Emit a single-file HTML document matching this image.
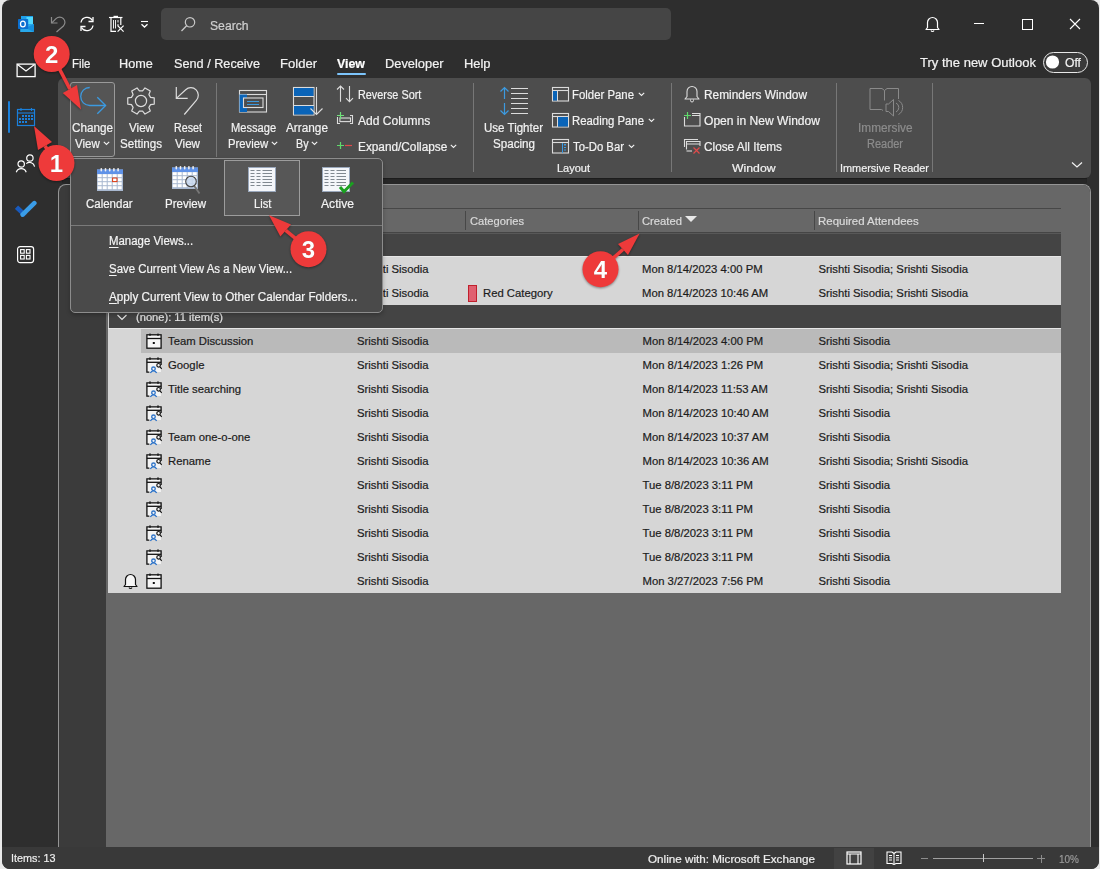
<!DOCTYPE html>
<html><head><meta charset="utf-8"><style>
html,body{margin:0;padding:0;}
body{width:1100px;height:869px;position:relative;overflow:hidden;background:#e9e9e9;font-family:"Liberation Sans", sans-serif;}
div{-webkit-text-stroke:0.2px currentColor;}
u{text-decoration:underline;text-underline-offset:1.5px;}
</style></head><body>
<div style="position:absolute;left:2px;top:0px;width:1097px;height:869px;background:#2e2e2e;border-radius:8px;"></div><svg style="position:absolute;left:17px;top:15px;" width="19" height="19" viewBox="0 0 19 19" fill="none">
<rect x="4" y="1" width="12" height="9" fill="#1fa0ea"/>
<rect x="9.5" y="2" width="6.5" height="7" fill="#50d9ff"/>
<path d="M3.2 9 L16.8 9 L16.8 17 L3.2 17 Z" fill="#28a8ea"/>
<path d="M9 13 L16.8 9 L16.8 17 Z" fill="#1490df"/>
<rect x="1" y="4" width="10.2" height="10" rx="0.8" fill="#0a6fd0"/>
<ellipse cx="5.9" cy="8.9" rx="2.4" ry="2.9" stroke="#fff" stroke-width="1.25"/>
</svg><svg style="position:absolute;left:49px;top:15px;" width="18" height="18" viewBox="0 0 18 18" fill="none">
<path d="M2.5 2 V8 H8.5" stroke="#8c8c8c" stroke-width="1.2"/>
<path d="M2.8 7.8 L7 3.6 A5.2 5.2 0 0 1 14.4 11 L7.5 17" stroke="#8c8c8c" stroke-width="1.2"/>
</svg><svg style="position:absolute;left:78px;top:15px;" width="18" height="18" viewBox="0 0 18 18" fill="none">
<path d="M3 7.5 A6.2 6.2 0 0 1 14.5 5.5" stroke="#fff" stroke-width="1.3"/>
<path d="M15 2 V6.5 H10.5" stroke="#fff" stroke-width="1.3"/>
<path d="M15 10.5 A6.2 6.2 0 0 1 3.5 12.5" stroke="#fff" stroke-width="1.3"/>
<path d="M3 16 V11.5 H7.5" stroke="#fff" stroke-width="1.3"/>
</svg><svg style="position:absolute;left:108px;top:15px;" width="18" height="18" viewBox="0 0 18 18" fill="none">
<path d="M1 2.5 H14.5" stroke="#fff" stroke-width="1.2"/>
<path d="M5.5 1.5 H10" stroke="#fff" stroke-width="1.4"/>
<path d="M3 2.5 V16.3 H8" stroke="#fff" stroke-width="1.2"/>
<path d="M12.8 2.5 V10" stroke="#fff" stroke-width="1.2"/>
<path d="M5.5 5 V13.5 M7.5 5 V13.5 M10 5 V7.5 M10 9 V11" stroke="#fff" stroke-width="0.9"/>
<path d="M9.6 10.6 L15.6 16.6 M15.6 10.6 L9.6 16.6" stroke="#fff" stroke-width="1.2"/>
</svg><svg style="position:absolute;left:140px;top:19px;" width="10" height="10" viewBox="0 0 10 10" fill="none">
<path d="M1 2.5 H8" stroke="#fff" stroke-width="1.1"/>
<path d="M1.5 5.2 L4.5 8 L7.5 5.2" stroke="#fff" stroke-width="1.3"/>
</svg><div style="position:absolute;left:161px;top:8px;width:510px;height:32px;background:#454545;border-radius:5px;"></div><svg style="position:absolute;left:180px;top:16px;" width="17" height="17" viewBox="0 0 17 17" fill="none">
<circle cx="10" cy="6.3" r="4.7" stroke="#c8c8c8" stroke-width="1.2"/>
<path d="M6.6 9.8 L1.5 15" stroke="#c8c8c8" stroke-width="1.3"/>
</svg><div style="position:absolute;left:210px;top:20.00px;font-size:12px;line-height:12px;color:#cfcfcf;font-weight:normal;white-space:nowrap;transform:scaleX(1.0150);transform-origin:0 0;">Search</div><svg style="position:absolute;left:924px;top:15px;" width="18" height="18" viewBox="0 0 18 18" fill="none">
<path d="M3.5 12.5 V7.5 A5 5 0 0 1 13.5 7.5 V12.5 L15 14.5 H2 L3.5 12.5 Z" stroke="#fff" stroke-width="1.2" stroke-linejoin="round"/>
<path d="M7 15.5 A1.6 1.6 0 0 0 10 15.5" stroke="#fff" stroke-width="1.1"/>
</svg><div style="position:absolute;left:974px;top:23px;width:10px;height:1px;background:#fff;"></div><div style="position:absolute;left:1022px;top:19px;width:9px;height:9px;border:1px solid #fff;"></div><svg style="position:absolute;left:1069px;top:18px;" width="12" height="12" viewBox="0 0 12 12" fill="none"><path d="M1 1 L11 11 M11 1 L1 11" stroke="#fff" stroke-width="1.1"/></svg><div style="position:absolute;left:72px;top:58.00px;font-size:12px;line-height:12px;color:#f2f2f2;font-weight:normal;white-space:nowrap;transform:scaleX(0.9564);transform-origin:0 0;">File</div><div style="position:absolute;left:118.8px;top:58.00px;font-size:12px;line-height:12px;color:#f2f2f2;font-weight:normal;white-space:nowrap;transform:scaleX(1.0557);transform-origin:0 0;">Home</div><div style="position:absolute;left:174px;top:58.00px;font-size:12px;line-height:12px;color:#f2f2f2;font-weight:normal;white-space:nowrap;transform:scaleX(1.0566);transform-origin:0 0;">Send / Receive</div><div style="position:absolute;left:280px;top:58.00px;font-size:12px;line-height:12px;color:#f2f2f2;font-weight:normal;white-space:nowrap;transform:scaleX(1.0877);transform-origin:0 0;">Folder</div><div style="position:absolute;left:385px;top:58.00px;font-size:12px;line-height:12px;color:#f2f2f2;font-weight:normal;white-space:nowrap;transform:scaleX(1.0712);transform-origin:0 0;">Developer</div><div style="position:absolute;left:464px;top:58.00px;font-size:12px;line-height:12px;color:#f2f2f2;font-weight:normal;white-space:nowrap;transform:scaleX(1.0734);transform-origin:0 0;">Help</div><div style="position:absolute;left:337px;top:58.00px;font-size:12px;line-height:12px;color:#ffffff;font-weight:bold;white-space:nowrap;transform:scaleX(1.0317);transform-origin:0 0;">View</div><div style="position:absolute;left:337px;top:73px;width:29px;height:2px;background:#7cc4fb;border-radius:1px;"></div><div style="position:absolute;left:920px;top:57.00px;font-size:12px;line-height:12px;color:#f2f2f2;font-weight:normal;white-space:nowrap;transform:scaleX(1.0847);transform-origin:0 0;">Try the new Outlook</div><div style="position:absolute;left:1043px;top:52px;width:43px;height:19px;border:1px solid #e8e8e8;border-radius:11px;background:#3a3a3a;"></div><svg style="position:absolute;left:1045px;top:55px;" width="16" height="16" viewBox="0 0 16 16" fill="none"><circle cx="7.5" cy="7" r="6.6" fill="#ffffff"/></svg><div style="position:absolute;left:1065px;top:57.00px;font-size:12px;line-height:12px;color:#f2f2f2;font-weight:normal;white-space:nowrap;transform:scaleX(1.0129);transform-origin:0 0;">Off</div><svg style="position:absolute;left:16px;top:63px;" width="21" height="16" viewBox="0 0 21 16" fill="none">
<rect x="1.1" y="1.1" width="18" height="12.5" stroke="#fff" stroke-width="1.3"/>
<path d="M1.5 1.5 L10 8 L18.5 1.5" stroke="#fff" stroke-width="1.2"/>
</svg><div style="position:absolute;left:8px;top:101px;width:2px;height:32px;background:#1a80dc;border-radius:1px;"></div><svg style="position:absolute;left:16px;top:106px;" width="21" height="22" viewBox="0 0 21 22" fill="none">
<rect x="1.5" y="3.5" width="17" height="16" stroke="#1a80dc" stroke-width="1.2"/>
<path d="M1.5 7 H18.5" stroke="#1a80dc" stroke-width="1.1"/>
<path d="M5 2 V5 M15.5 2 V5" stroke="#1a80dc" stroke-width="1.1"/>
<g fill="#1a80dc">
<rect x="6" y="9" width="2" height="2"/><rect x="9" y="9" width="2" height="2"/><rect x="12" y="9" width="2" height="2"/><rect x="15" y="9" width="2" height="2"/>
<rect x="3" y="12" width="2" height="2"/><rect x="6" y="12" width="2" height="2"/><rect x="9" y="12" width="2" height="2"/><rect x="12" y="12" width="2" height="2"/><rect x="15" y="12" width="2" height="2"/>
<rect x="3" y="15" width="2" height="2"/><rect x="6" y="15" width="2" height="2"/><rect x="9" y="15" width="2" height="2"/>
</g>
</svg><svg style="position:absolute;left:15px;top:152px;" width="22" height="22" viewBox="0 0 22 22" fill="none">
<circle cx="6.2" cy="12" r="3.2" stroke="#fff" stroke-width="1.2"/>
<path d="M1.3 20.3 A5.2 5.2 0 0 1 11.2 20.3" stroke="#fff" stroke-width="1.2"/>
<circle cx="14.9" cy="6" r="3.2" stroke="#fff" stroke-width="1.2"/>
<path d="M11.3 11.6 A5.2 5.2 0 0 1 19.6 14.6" stroke="#fff" stroke-width="1.2"/>
</svg><svg style="position:absolute;left:15px;top:199px;" width="22" height="20" viewBox="0 0 22 20" fill="none">
<path d="M3.2 9.8 L8.6 14.8" stroke="#185abd" stroke-width="4.6" stroke-linecap="square"/>
<path d="M7.6 15.6 L19.3 4.2" stroke="#3a9de8" stroke-width="4.6" stroke-linecap="round"/>
</svg><svg style="position:absolute;left:16px;top:245px;" width="19" height="19" viewBox="0 0 19 19" fill="none">
<rect x="1.6" y="1.6" width="16" height="16" rx="2.5" stroke="#fff" stroke-width="1.2"/>
<rect x="4.6" y="4.6" width="3.6" height="3.6" stroke="#fff" stroke-width="1.1"/>
<rect x="10.4" y="4.6" width="3.6" height="3.6" stroke="#fff" stroke-width="1.1"/>
<rect x="4.6" y="10.4" width="3.6" height="3.6" stroke="#fff" stroke-width="1.1"/>
<rect x="10.4" y="10.4" width="3.6" height="3.6" stroke="#fff" stroke-width="1.1"/>
</svg><div style="position:absolute;left:62px;top:178px;width:1025px;height:6px;background:#272727;box-shadow:inset 0 1px 1px #1c1c1c;border-radius:0 0 3px 3px;"></div><div style="position:absolute;left:58px;top:78px;width:1033px;height:100px;background:#4d4d4d;border-radius:6px;"></div><div style="position:absolute;left:70px;top:82px;width:45px;height:75px;background:#555555;border:1px solid #9a9a9a;border-radius:3px;box-sizing:border-box;"></div><svg style="position:absolute;left:78px;top:85px;" width="30" height="31" viewBox="0 0 30 31" fill="none">
<path d="M11.7 2.5 A9 9 0 0 0 11.7 20.5 H27.5" stroke="#3c9ae0" stroke-width="1.3"/>
<path d="M19.3 12.2 L27.6 20.5 L19.3 28.7" stroke="#3c9ae0" stroke-width="1.3"/>
</svg><div style="position:absolute;left:72px;top:122.00px;font-size:12px;line-height:12px;color:#f2f2f2;font-weight:normal;white-space:nowrap;transform:scaleX(0.9751);transform-origin:0 0;">Change</div><div style="position:absolute;left:75px;top:138.00px;font-size:12px;line-height:12px;color:#f2f2f2;font-weight:normal;white-space:nowrap;transform:scaleX(0.9614);transform-origin:0 0;">View</div><svg style="position:absolute;left:103px;top:141px;" width="7" height="5" viewBox="0 0 7 5" fill="none"><path d="M0.8 0.8 L3.5 3.5 L6.2 0.8" stroke="#f2f2f2" stroke-width="1.1"/></svg><svg style="position:absolute;left:125px;top:85px;" width="32" height="32" viewBox="0 0 32 32" fill="none">
<path d="M25.52 12.34 L29.25 12.94 L29.25 19.06 L25.52 19.66 L23.93 22.42 L25.28 25.95 L19.98 29.01 L17.60 26.07 L14.40 26.07 L12.02 29.01 L6.72 25.95 L8.07 22.42 L6.48 19.66 L2.75 19.06 L2.75 12.94 L6.48 12.34 L8.07 9.58 L6.72 6.05 L12.02 2.99 L14.40 5.93 L17.60 5.93 L19.98 2.99 L25.28 6.05 L23.93 9.58 Z" stroke="#dcdcdc" stroke-width="1.2" stroke-linejoin="round"/>
<circle cx="16" cy="16" r="5.6" stroke="#dcdcdc" stroke-width="1.2"/>
</svg><div style="position:absolute;left:129px;top:122.00px;font-size:12px;line-height:12px;color:#f2f2f2;font-weight:normal;white-space:nowrap;transform:scaleX(0.9691);transform-origin:0 0;">View</div><div style="position:absolute;left:120px;top:138.00px;font-size:12px;line-height:12px;color:#f2f2f2;font-weight:normal;white-space:nowrap;transform:scaleX(0.9686);transform-origin:0 0;">Settings</div><svg style="position:absolute;left:173px;top:85px;" width="30" height="32" viewBox="0 0 30 32" fill="none">
<path d="M3.3 2 V13.4 H14.7" stroke="#dcdcdc" stroke-width="1.2"/>
<path d="M3.3 13.4 L12.7 4.7 A7.5 7.5 0 0 1 23.3 15.3 L11.3 29.5" stroke="#dcdcdc" stroke-width="1.2"/>
</svg><div style="position:absolute;left:174px;top:122.00px;font-size:12px;line-height:12px;color:#f2f2f2;font-weight:normal;white-space:nowrap;transform:scaleX(0.8929);transform-origin:0 0;">Reset</div><div style="position:absolute;left:175px;top:138.00px;font-size:12px;line-height:12px;color:#f2f2f2;font-weight:normal;white-space:nowrap;transform:scaleX(0.9691);transform-origin:0 0;">View</div><div style="position:absolute;left:216px;top:83px;width:1px;height:74px;background:#777777;"></div><svg style="position:absolute;left:238px;top:89px;" width="31" height="25" viewBox="0 0 31 25" fill="none">
<rect x="1.5" y="1.5" width="27" height="21.5" stroke="#dcdcdc" stroke-width="1.1"/>
<path d="M1.5 5.5 H28.5" stroke="#dcdcdc" stroke-width="1.1"/>
<rect x="1.5" y="5.5" width="7.5" height="17.5" fill="#0a64b8"/>
<rect x="5.5" y="9" width="19.5" height="9.5" fill="#4d4d4d" stroke="#dcdcdc" stroke-width="1.1"/>
<path d="M9 12.5 H21 M9 15.5 H21" stroke="#3c9ae0" stroke-width="1"/>
</svg><div style="position:absolute;left:230.8px;top:122.00px;font-size:12px;line-height:12px;color:#f2f2f2;font-weight:normal;white-space:nowrap;transform:scaleX(0.9281);transform-origin:0 0;">Message</div><div style="position:absolute;left:227.8px;top:138.00px;font-size:12px;line-height:12px;color:#f2f2f2;font-weight:normal;white-space:nowrap;transform:scaleX(0.9417);transform-origin:0 0;">Preview</div><svg style="position:absolute;left:271px;top:141px;" width="7" height="5" viewBox="0 0 7 5" fill="none"><path d="M0.8 0.8 L3.5 3.5 L6.2 0.8" stroke="#f2f2f2" stroke-width="1.1"/></svg><svg style="position:absolute;left:292px;top:86px;" width="32" height="31" viewBox="0 0 32 31" fill="none">
<rect x="1.5" y="1.5" width="20.5" height="27.5" stroke="#dcdcdc" stroke-width="1.1"/>
<rect x="2" y="2" width="19.5" height="8.5" fill="#0a64b8"/>
<rect x="2" y="19.5" width="19.5" height="9" fill="#0a64b8"/>
<path d="M1.5 10.5 H22 M1.5 19.5 H22" stroke="#dcdcdc" stroke-width="1.1"/>
<path d="M24.5 1 V28.5 M18.5 22.5 L24.5 28.5 L30.5 22.5" stroke="#dcdcdc" stroke-width="1.1"/>
</svg><div style="position:absolute;left:286px;top:122.00px;font-size:12px;line-height:12px;color:#f2f2f2;font-weight:normal;white-space:nowrap;transform:scaleX(0.9835);transform-origin:0 0;">Arrange</div><div style="position:absolute;left:295.5px;top:138.00px;font-size:12px;line-height:12px;color:#f2f2f2;font-weight:normal;white-space:nowrap;transform:scaleX(0.8919);transform-origin:0 0;">By</div><svg style="position:absolute;left:311px;top:141px;" width="7" height="5" viewBox="0 0 7 5" fill="none"><path d="M0.8 0.8 L3.5 3.5 L6.2 0.8" stroke="#f2f2f2" stroke-width="1.1"/></svg><svg style="position:absolute;left:335px;top:84px;" width="20" height="20" viewBox="0 0 20 20" fill="none">
<path d="M5.5 2 V17.7 M2 5.5 L5.5 2 L9 5.5" stroke="#dcdcdc" stroke-width="1.1"/>
<path d="M14.5 2 V17.7 M11 14.2 L14.5 17.7 L18 14.2" stroke="#dcdcdc" stroke-width="1.1"/>
</svg><div style="position:absolute;left:357.7px;top:89.00px;font-size:12px;line-height:12px;color:#f2f2f2;font-weight:normal;white-space:nowrap;transform:scaleX(0.9039);transform-origin:0 0;">Reverse Sort</div><svg style="position:absolute;left:335px;top:110px;" width="20" height="17" viewBox="0 0 20 17" fill="none">
<path d="M2.5 7 V13.5 H5" stroke="#dcdcdc" stroke-width="1.1"/>
<path d="M15 5.5 H17.5 V13.5 H15" stroke="#dcdcdc" stroke-width="1.1"/>
<rect x="4.9" y="8" width="10.6" height="3.6" fill="#555" stroke="#dcdcdc" stroke-width="1.1"/>
<path d="M5.5 2 V9 M2 5.5 H9" stroke="#6fe07a" stroke-width="1.2"/>
</svg><div style="position:absolute;left:357.7px;top:115.00px;font-size:12px;line-height:12px;color:#f2f2f2;font-weight:normal;white-space:nowrap;transform:scaleX(1.0035);transform-origin:0 0;">Add Columns</div><svg style="position:absolute;left:335px;top:140px;" width="20" height="12" viewBox="0 0 20 12" fill="none"><path d="M5.5 2 V9 M2 5.5 H9" stroke="#5fd96b" stroke-width="1.2"/><path d="M10 5.5 H17" stroke="#e04a4a" stroke-width="1.2"/></svg><div style="position:absolute;left:357.7px;top:141.00px;font-size:12px;line-height:12px;color:#f2f2f2;font-weight:normal;white-space:nowrap;transform:scaleX(0.9842);transform-origin:0 0;">Expand/Collapse</div><svg style="position:absolute;left:450px;top:144px;" width="7" height="5" viewBox="0 0 7 5" fill="none"><path d="M0.8 0.8 L3.5 3.5 L6.2 0.8" stroke="#f2f2f2" stroke-width="1.1"/></svg><div style="position:absolute;left:473px;top:83px;width:1px;height:89px;background:#777777;"></div><svg style="position:absolute;left:498px;top:85px;" width="32" height="32" viewBox="0 0 32 32" fill="none">
<path d="M6.5 2.5 V14 M2.5 6.5 L6.5 2.5 L10.5 6.5" stroke="#3c9ae0" stroke-width="1.2"/>
<path d="M6.5 18 V29.5 M2.5 25.5 L6.5 29.5 L10.5 25.5" stroke="#3c9ae0" stroke-width="1.2"/>
<path d="M13 3.5 H30 M13 8.5 H30 M13 13.5 H30 M13 18.5 H30 M13 23.5 H30 M13 28.5 H30" stroke="#dcdcdc" stroke-width="1.1"/>
</svg><div style="position:absolute;left:484px;top:122.00px;font-size:12px;line-height:12px;color:#f2f2f2;font-weight:normal;white-space:nowrap;transform:scaleX(0.9615);transform-origin:0 0;">Use Tighter</div><div style="position:absolute;left:493px;top:138.00px;font-size:12px;line-height:12px;color:#f2f2f2;font-weight:normal;white-space:nowrap;transform:scaleX(0.9683);transform-origin:0 0;">Spacing</div><svg style="position:absolute;left:551px;top:86px;" width="19" height="17" viewBox="0 0 19 17" fill="none">
<rect x="1.5" y="1.5" width="16" height="13.5" stroke="#dcdcdc" stroke-width="1.1"/>
<path d="M1.5 4.5 H17.5" stroke="#dcdcdc" stroke-width="1.1"/>
<rect x="2" y="5" width="4" height="9.5" fill="#0a64b8"/>
<path d="M6.5 5 V15" stroke="#dcdcdc" stroke-width="1"/>
</svg><div style="position:absolute;left:572px;top:89.00px;font-size:12px;line-height:12px;color:#f2f2f2;font-weight:normal;white-space:nowrap;transform:scaleX(0.9484);transform-origin:0 0;">Folder Pane</div><svg style="position:absolute;left:637.5px;top:92px;" width="7" height="5" viewBox="0 0 7 5" fill="none"><path d="M0.8 0.8 L3.5 3.5 L6.2 0.8" stroke="#f2f2f2" stroke-width="1.1"/></svg><svg style="position:absolute;left:551px;top:112px;" width="19" height="17" viewBox="0 0 19 17" fill="none">
<rect x="1.5" y="1.5" width="16" height="13.5" stroke="#dcdcdc" stroke-width="1.1"/>
<path d="M1.5 4.5 H17.5" stroke="#dcdcdc" stroke-width="1.1"/>
<rect x="7" y="5" width="10" height="9.5" fill="#0a64b8"/>
<path d="M6.5 5 V15" stroke="#dcdcdc" stroke-width="1"/>
</svg><div style="position:absolute;left:572px;top:115.00px;font-size:12px;line-height:12px;color:#f2f2f2;font-weight:normal;white-space:nowrap;transform:scaleX(0.9466);transform-origin:0 0;">Reading Pane</div><svg style="position:absolute;left:647.5px;top:118px;" width="7" height="5" viewBox="0 0 7 5" fill="none"><path d="M0.8 0.8 L3.5 3.5 L6.2 0.8" stroke="#f2f2f2" stroke-width="1.1"/></svg><svg style="position:absolute;left:551px;top:138px;" width="19" height="17" viewBox="0 0 19 17" fill="none">
<rect x="1.5" y="1.5" width="16" height="13.5" stroke="#dcdcdc" stroke-width="1.1"/>
<path d="M1.5 4.5 H17.5" stroke="#dcdcdc" stroke-width="1.1"/>
<path d="M11.5 5 V15" stroke="#3c9ae0" stroke-width="1"/>
<rect x="13" y="6" width="2" height="1.5" fill="#3c9ae0"/><rect x="13" y="9" width="2" height="1" fill="#3c9ae0"/><rect x="13" y="11.5" width="2" height="1" fill="#3c9ae0"/>
</svg><div style="position:absolute;left:572.5px;top:141.00px;font-size:12px;line-height:12px;color:#f2f2f2;font-weight:normal;white-space:nowrap;transform:scaleX(0.9439);transform-origin:0 0;">To-Do Bar</div><svg style="position:absolute;left:627.5px;top:144px;" width="7" height="5" viewBox="0 0 7 5" fill="none"><path d="M0.8 0.8 L3.5 3.5 L6.2 0.8" stroke="#f2f2f2" stroke-width="1.1"/></svg><div style="position:absolute;left:556.8px;top:163.00px;font-size:11.3px;line-height:11.3px;color:#f2f2f2;font-weight:normal;white-space:nowrap;transform:scaleX(0.9728);transform-origin:0 0;">Layout</div><div style="position:absolute;left:671px;top:83px;width:1px;height:89px;background:#777777;"></div><svg style="position:absolute;left:683px;top:84px;" width="18" height="19" viewBox="0 0 18 19" fill="none">
<path d="M4 12.5 V7.5 A5 5 0 0 1 14 7.5 V12.5 L16 15 H2 Z" stroke="#dcdcdc" stroke-width="1.1" stroke-linejoin="round"/>
<path d="M7.5 15.5 V16.5 A1.5 1.5 0 0 0 10.5 16.5 V15.5" stroke="#dcdcdc" stroke-width="1"/>
</svg><div style="position:absolute;left:704px;top:89.00px;font-size:12px;line-height:12px;color:#f2f2f2;font-weight:normal;white-space:nowrap;transform:scaleX(0.9899);transform-origin:0 0;">Reminders Window</div><svg style="position:absolute;left:683px;top:110px;" width="19" height="18" viewBox="0 0 19 18" fill="none">
<path d="M1.5 7 V16 H17 V3.5 H9" stroke="#dcdcdc" stroke-width="1.1"/>
<path d="M9 5.5 H17" stroke="#dcdcdc" stroke-width="1"/>
<path d="M4.5 2 V9 M1 5.5 H8" stroke="#5fd96b" stroke-width="1.2"/>
</svg><div style="position:absolute;left:704px;top:115.00px;font-size:12px;line-height:12px;color:#f2f2f2;font-weight:normal;white-space:nowrap;transform:scaleX(1.0053);transform-origin:0 0;">Open in New Window</div><svg style="position:absolute;left:683px;top:137px;" width="19" height="19" viewBox="0 0 19 19" fill="none">
<path d="M1.5 10 V2.5 H15" stroke="#dcdcdc" stroke-width="1.1"/>
<path d="M3.5 12.5 V4.5 H17 V9" stroke="#dcdcdc" stroke-width="1.1"/>
<path d="M3.5 7 H17" stroke="#dcdcdc" stroke-width="1"/>
<path d="M3.5 14 H9" stroke="#dcdcdc" stroke-width="1.1"/>
<path d="M10.5 10.5 L16.5 16.5 M16.5 10.5 L10.5 16.5" stroke="#e04a4a" stroke-width="1.2"/>
</svg><div style="position:absolute;left:704px;top:141.00px;font-size:12px;line-height:12px;color:#f2f2f2;font-weight:normal;white-space:nowrap;transform:scaleX(0.9829);transform-origin:0 0;">Close All Items</div><div style="position:absolute;left:732px;top:163.00px;font-size:11.3px;line-height:11.3px;color:#f2f2f2;font-weight:normal;white-space:nowrap;transform:scaleX(1.0849);transform-origin:0 0;">Window</div><div style="position:absolute;left:836px;top:83px;width:1px;height:89px;background:#777777;"></div><svg style="position:absolute;left:868px;top:86px;" width="36" height="34" viewBox="0 0 36 34" fill="none">
<path d="M2 2.5 H14 L16.5 4.5 L19 2.5 H30.5 V13" stroke="#8a8a8a" stroke-width="1"/>
<path d="M2 2.5 V23.5 H13.5 L15 24.5" stroke="#8a8a8a" stroke-width="1"/>
<path d="M16.5 4.5 V14.5" stroke="#8a8a8a" stroke-width="1"/>
<path d="M18 18 H20.5 L25.5 13.5 V30 L20.5 25.5 H18 Z" stroke="#8a8a8a" stroke-width="1" stroke-linejoin="round"/>
<path d="M28 17 A5 5 0 0 1 28 26 M30.5 14.5 A8 8 0 0 1 30.5 28.5" stroke="#8a8a8a" stroke-width="1"/>
</svg><div style="position:absolute;left:857.5px;top:122.00px;font-size:12px;line-height:12px;color:#8c8c8c;font-weight:normal;white-space:nowrap;transform:scaleX(0.9848);transform-origin:0 0;">Immersive</div><div style="position:absolute;left:867px;top:138.00px;font-size:12px;line-height:12px;color:#8c8c8c;font-weight:normal;white-space:nowrap;transform:scaleX(0.9146);transform-origin:0 0;">Reader</div><div style="position:absolute;left:840px;top:163.00px;font-size:11.3px;line-height:11.3px;color:#f2f2f2;font-weight:normal;white-space:nowrap;transform:scaleX(0.9643);transform-origin:0 0;">Immersive Reader</div><div style="position:absolute;left:932px;top:83px;width:1px;height:89px;background:#777777;"></div><svg style="position:absolute;left:1070.5px;top:160.5px;" width="12" height="8" viewBox="0 0 12 8" fill="none"><path d="M1 1.5 L6 6 L11 1.5" stroke="#f2f2f2" stroke-width="1.2"/></svg><div style="position:absolute;left:58px;top:184px;width:1033px;height:680px;background:#3b3b3b;border:1px solid #959595;border-bottom:none;border-radius:8px 8px 0 0;box-sizing:border-box;"></div><div style="position:absolute;left:106px;top:185px;width:984px;height:662px;background:#676767;border-radius:0 7px 0 0;"></div><div style="position:absolute;left:108px;top:208px;width:953px;height:1px;background:#474747;"></div><div style="position:absolute;left:353px;top:211px;width:1px;height:19px;background:#474747;"></div><div style="position:absolute;left:465px;top:211px;width:1px;height:19px;background:#474747;"></div><div style="position:absolute;left:638px;top:211px;width:1px;height:19px;background:#474747;"></div><div style="position:absolute;left:814px;top:211px;width:1px;height:19px;background:#474747;"></div><div style="position:absolute;left:469.6px;top:216.00px;font-size:11.3px;line-height:11.3px;color:#dadada;font-weight:normal;white-space:nowrap;transform:scaleX(0.9883);transform-origin:0 0;">Categories</div><div style="position:absolute;left:642px;top:216.00px;font-size:11.3px;line-height:11.3px;color:#dadada;font-weight:normal;white-space:nowrap;transform:scaleX(0.9949);transform-origin:0 0;">Created</div><svg style="position:absolute;left:684px;top:215px;" width="14" height="8" viewBox="0 0 14 8" fill="none"><path d="M1 1 H13 L7 7 Z" fill="#e8e8e8"/></svg><div style="position:absolute;left:818px;top:216.00px;font-size:11.3px;line-height:11.3px;color:#dadada;font-weight:normal;white-space:nowrap;transform:scaleX(1.0148);transform-origin:0 0;">Required Attendees</div><div style="position:absolute;left:108px;top:232px;width:953px;height:1px;background:#454545;"></div><div style="position:absolute;left:108px;top:233px;width:953px;height:1px;background:#585858;"></div><div style="position:absolute;left:108px;top:234px;width:953px;height:22px;background:#444444;border-left:1px solid #cfcfcf;box-sizing:border-box;"></div><div style="position:absolute;left:108px;top:256px;width:953px;height:49px;background:#d6d6d6;border-top:1px solid #e6e6e6;box-sizing:border-box;"></div><div style="position:absolute;left:357px;top:264.00px;font-size:11.3px;line-height:11.3px;color:#1c1c1c;font-weight:normal;white-space:nowrap;">Srishti Sisodia</div><div style="position:absolute;left:642px;top:264.00px;font-size:11.3px;line-height:11.3px;color:#1c1c1c;font-weight:normal;white-space:nowrap;">Mon 8/14/2023 4:00 PM</div><div style="position:absolute;left:818.5px;top:264.00px;font-size:11.3px;line-height:11.3px;color:#1c1c1c;font-weight:normal;white-space:nowrap;">Srishti Sisodia; Srishti Sisodia</div><div style="position:absolute;left:357px;top:288.00px;font-size:11.3px;line-height:11.3px;color:#1c1c1c;font-weight:normal;white-space:nowrap;">Srishti Sisodia</div><div style="position:absolute;left:468px;top:285px;width:9px;height:17px;background:#e06070;border:1px solid #c0202c;box-sizing:border-box;"></div><div style="position:absolute;left:483px;top:288.00px;font-size:11.3px;line-height:11.3px;color:#1c1c1c;font-weight:normal;white-space:nowrap;">Red Category</div><div style="position:absolute;left:642px;top:288.00px;font-size:11.3px;line-height:11.3px;color:#1c1c1c;font-weight:normal;white-space:nowrap;">Mon 8/14/2023 10:46 AM</div><div style="position:absolute;left:818.5px;top:288.00px;font-size:11.3px;line-height:11.3px;color:#1c1c1c;font-weight:normal;white-space:nowrap;">Srishti Sisodia; Srishti Sisodia</div><div style="position:absolute;left:108px;top:305px;width:953px;height:23px;background:#444444;border-left:1px solid #cfcfcf;box-sizing:border-box;"></div><svg style="position:absolute;left:116px;top:313px;" width="12" height="9" viewBox="0 0 12 9" fill="none"><path d="M1.5 2 L6 6.5 L10.5 2" stroke="#e6e6e6" stroke-width="1.2"/></svg><div style="position:absolute;left:136px;top:312.00px;font-size:11.3px;line-height:11.3px;color:#e4e4e4;font-weight:normal;white-space:nowrap;transform:scaleX(0.9851);transform-origin:0 0;">(none): 11 item(s)</div><div style="position:absolute;left:108px;top:328px;width:953px;height:265px;background:#d6d6d6;border-top:1px solid #e6e6e6;box-sizing:border-box;"></div><div style="position:absolute;left:141px;top:329px;width:920px;height:24px;background:#bababa;"></div><svg style="position:absolute;left:146px;top:332.5px;" width="16" height="17" viewBox="0 0 16 17" fill="none"><rect x="0.9" y="1.8" width="14.2" height="13.4" fill="#f6f6f6" stroke="#111" stroke-width="1.3"/>
<path d="M0.9 5.5 H15.1" stroke="#111" stroke-width="1.3"/><path d="M4 0.5 V3 M12 0.5 V3" stroke="#111" stroke-width="1.1"/>
<rect x="6.8" y="9" width="2" height="2" fill="#111"/></svg><div style="position:absolute;left:168px;top:336.00px;font-size:11.3px;line-height:11.3px;color:#1c1c1c;font-weight:normal;white-space:nowrap;">Team Discussion</div><div style="position:absolute;left:357px;top:336.00px;font-size:11.3px;line-height:11.3px;color:#1c1c1c;font-weight:normal;white-space:nowrap;">Srishti Sisodia</div><div style="position:absolute;left:642.5px;top:336.00px;font-size:11.3px;line-height:11.3px;color:#1c1c1c;font-weight:normal;white-space:nowrap;">Mon 8/14/2023 4:00 PM</div><div style="position:absolute;left:818.5px;top:336.00px;font-size:11.3px;line-height:11.3px;color:#1c1c1c;font-weight:normal;white-space:nowrap;">Srishti Sisodia</div><svg style="position:absolute;left:146px;top:356.5px;" width="16" height="17" viewBox="0 0 16 17" fill="none"><rect x="1.3" y="2.2" width="13.6" height="12.8" fill="#f4f4f4"/>
<path d="M3.3 15.2 H0.9 V1.8 H15.1 V8" stroke="#111" stroke-width="1.3"/>
<path d="M0.9 5.3 H15.1" stroke="#111" stroke-width="1.3"/><path d="M4 0.3 V3 M12 0.3 V3" stroke="#111" stroke-width="1.1"/>
<circle cx="7.5" cy="11.8" r="1.8" stroke="#2f74c8" stroke-width="1.3"/>
<path d="M4.4 16 A3.3 3.3 0 0 1 10.6 16" stroke="#2f74c8" stroke-width="1.3"/>
<circle cx="12.6" cy="8.3" r="1.8" fill="#f4f4f4" stroke="#111" stroke-width="1.2"/>
<path d="M13.9 9.8 L15.8 11.8" stroke="#111" stroke-width="1.2"/></svg><div style="position:absolute;left:168px;top:360.00px;font-size:11.3px;line-height:11.3px;color:#1c1c1c;font-weight:normal;white-space:nowrap;">Google</div><div style="position:absolute;left:357px;top:360.00px;font-size:11.3px;line-height:11.3px;color:#1c1c1c;font-weight:normal;white-space:nowrap;">Srishti Sisodia</div><div style="position:absolute;left:642.5px;top:360.00px;font-size:11.3px;line-height:11.3px;color:#1c1c1c;font-weight:normal;white-space:nowrap;">Mon 8/14/2023 1:26 PM</div><div style="position:absolute;left:818.5px;top:360.00px;font-size:11.3px;line-height:11.3px;color:#1c1c1c;font-weight:normal;white-space:nowrap;">Srishti Sisodia; Srishti Sisodia</div><svg style="position:absolute;left:146px;top:380.5px;" width="16" height="17" viewBox="0 0 16 17" fill="none"><rect x="1.3" y="2.2" width="13.6" height="12.8" fill="#f4f4f4"/>
<path d="M3.3 15.2 H0.9 V1.8 H15.1 V8" stroke="#111" stroke-width="1.3"/>
<path d="M0.9 5.3 H15.1" stroke="#111" stroke-width="1.3"/><path d="M4 0.3 V3 M12 0.3 V3" stroke="#111" stroke-width="1.1"/>
<circle cx="7.5" cy="11.8" r="1.8" stroke="#2f74c8" stroke-width="1.3"/>
<path d="M4.4 16 A3.3 3.3 0 0 1 10.6 16" stroke="#2f74c8" stroke-width="1.3"/>
<circle cx="12.6" cy="8.3" r="1.8" fill="#f4f4f4" stroke="#111" stroke-width="1.2"/>
<path d="M13.9 9.8 L15.8 11.8" stroke="#111" stroke-width="1.2"/></svg><div style="position:absolute;left:168px;top:384.00px;font-size:11.3px;line-height:11.3px;color:#1c1c1c;font-weight:normal;white-space:nowrap;">Title searching</div><div style="position:absolute;left:357px;top:384.00px;font-size:11.3px;line-height:11.3px;color:#1c1c1c;font-weight:normal;white-space:nowrap;">Srishti Sisodia</div><div style="position:absolute;left:642.5px;top:384.00px;font-size:11.3px;line-height:11.3px;color:#1c1c1c;font-weight:normal;white-space:nowrap;">Mon 8/14/2023 11:53 AM</div><div style="position:absolute;left:818.5px;top:384.00px;font-size:11.3px;line-height:11.3px;color:#1c1c1c;font-weight:normal;white-space:nowrap;">Srishti Sisodia; Srishti Sisodia</div><svg style="position:absolute;left:146px;top:404.5px;" width="16" height="17" viewBox="0 0 16 17" fill="none"><rect x="1.3" y="2.2" width="13.6" height="12.8" fill="#f4f4f4"/>
<path d="M3.3 15.2 H0.9 V1.8 H15.1 V8" stroke="#111" stroke-width="1.3"/>
<path d="M0.9 5.3 H15.1" stroke="#111" stroke-width="1.3"/><path d="M4 0.3 V3 M12 0.3 V3" stroke="#111" stroke-width="1.1"/>
<circle cx="7.5" cy="11.8" r="1.8" stroke="#2f74c8" stroke-width="1.3"/>
<path d="M4.4 16 A3.3 3.3 0 0 1 10.6 16" stroke="#2f74c8" stroke-width="1.3"/>
<circle cx="12.6" cy="8.3" r="1.8" fill="#f4f4f4" stroke="#111" stroke-width="1.2"/>
<path d="M13.9 9.8 L15.8 11.8" stroke="#111" stroke-width="1.2"/></svg><div style="position:absolute;left:357px;top:408.00px;font-size:11.3px;line-height:11.3px;color:#1c1c1c;font-weight:normal;white-space:nowrap;">Srishti Sisodia</div><div style="position:absolute;left:642.5px;top:408.00px;font-size:11.3px;line-height:11.3px;color:#1c1c1c;font-weight:normal;white-space:nowrap;">Mon 8/14/2023 10:40 AM</div><div style="position:absolute;left:818.5px;top:408.00px;font-size:11.3px;line-height:11.3px;color:#1c1c1c;font-weight:normal;white-space:nowrap;">Srishti Sisodia</div><svg style="position:absolute;left:146px;top:428.5px;" width="16" height="17" viewBox="0 0 16 17" fill="none"><rect x="1.3" y="2.2" width="13.6" height="12.8" fill="#f4f4f4"/>
<path d="M3.3 15.2 H0.9 V1.8 H15.1 V8" stroke="#111" stroke-width="1.3"/>
<path d="M0.9 5.3 H15.1" stroke="#111" stroke-width="1.3"/><path d="M4 0.3 V3 M12 0.3 V3" stroke="#111" stroke-width="1.1"/>
<circle cx="7.5" cy="11.8" r="1.8" stroke="#2f74c8" stroke-width="1.3"/>
<path d="M4.4 16 A3.3 3.3 0 0 1 10.6 16" stroke="#2f74c8" stroke-width="1.3"/>
<circle cx="12.6" cy="8.3" r="1.8" fill="#f4f4f4" stroke="#111" stroke-width="1.2"/>
<path d="M13.9 9.8 L15.8 11.8" stroke="#111" stroke-width="1.2"/></svg><div style="position:absolute;left:168px;top:432.00px;font-size:11.3px;line-height:11.3px;color:#1c1c1c;font-weight:normal;white-space:nowrap;">Team one-o-one</div><div style="position:absolute;left:357px;top:432.00px;font-size:11.3px;line-height:11.3px;color:#1c1c1c;font-weight:normal;white-space:nowrap;">Srishti Sisodia</div><div style="position:absolute;left:642.5px;top:432.00px;font-size:11.3px;line-height:11.3px;color:#1c1c1c;font-weight:normal;white-space:nowrap;">Mon 8/14/2023 10:37 AM</div><div style="position:absolute;left:818.5px;top:432.00px;font-size:11.3px;line-height:11.3px;color:#1c1c1c;font-weight:normal;white-space:nowrap;">Srishti Sisodia</div><svg style="position:absolute;left:146px;top:452.5px;" width="16" height="17" viewBox="0 0 16 17" fill="none"><rect x="1.3" y="2.2" width="13.6" height="12.8" fill="#f4f4f4"/>
<path d="M3.3 15.2 H0.9 V1.8 H15.1 V8" stroke="#111" stroke-width="1.3"/>
<path d="M0.9 5.3 H15.1" stroke="#111" stroke-width="1.3"/><path d="M4 0.3 V3 M12 0.3 V3" stroke="#111" stroke-width="1.1"/>
<circle cx="7.5" cy="11.8" r="1.8" stroke="#2f74c8" stroke-width="1.3"/>
<path d="M4.4 16 A3.3 3.3 0 0 1 10.6 16" stroke="#2f74c8" stroke-width="1.3"/>
<circle cx="12.6" cy="8.3" r="1.8" fill="#f4f4f4" stroke="#111" stroke-width="1.2"/>
<path d="M13.9 9.8 L15.8 11.8" stroke="#111" stroke-width="1.2"/></svg><div style="position:absolute;left:168px;top:456.00px;font-size:11.3px;line-height:11.3px;color:#1c1c1c;font-weight:normal;white-space:nowrap;">Rename</div><div style="position:absolute;left:357px;top:456.00px;font-size:11.3px;line-height:11.3px;color:#1c1c1c;font-weight:normal;white-space:nowrap;">Srishti Sisodia</div><div style="position:absolute;left:642.5px;top:456.00px;font-size:11.3px;line-height:11.3px;color:#1c1c1c;font-weight:normal;white-space:nowrap;">Mon 8/14/2023 10:36 AM</div><div style="position:absolute;left:818.5px;top:456.00px;font-size:11.3px;line-height:11.3px;color:#1c1c1c;font-weight:normal;white-space:nowrap;">Srishti Sisodia; Srishti Sisodia</div><svg style="position:absolute;left:146px;top:476.5px;" width="16" height="17" viewBox="0 0 16 17" fill="none"><rect x="1.3" y="2.2" width="13.6" height="12.8" fill="#f4f4f4"/>
<path d="M3.3 15.2 H0.9 V1.8 H15.1 V8" stroke="#111" stroke-width="1.3"/>
<path d="M0.9 5.3 H15.1" stroke="#111" stroke-width="1.3"/><path d="M4 0.3 V3 M12 0.3 V3" stroke="#111" stroke-width="1.1"/>
<circle cx="7.5" cy="11.8" r="1.8" stroke="#2f74c8" stroke-width="1.3"/>
<path d="M4.4 16 A3.3 3.3 0 0 1 10.6 16" stroke="#2f74c8" stroke-width="1.3"/>
<circle cx="12.6" cy="8.3" r="1.8" fill="#f4f4f4" stroke="#111" stroke-width="1.2"/>
<path d="M13.9 9.8 L15.8 11.8" stroke="#111" stroke-width="1.2"/></svg><div style="position:absolute;left:357px;top:480.00px;font-size:11.3px;line-height:11.3px;color:#1c1c1c;font-weight:normal;white-space:nowrap;">Srishti Sisodia</div><div style="position:absolute;left:642.5px;top:480.00px;font-size:11.3px;line-height:11.3px;color:#1c1c1c;font-weight:normal;white-space:nowrap;">Tue 8/8/2023 3:11 PM</div><div style="position:absolute;left:818.5px;top:480.00px;font-size:11.3px;line-height:11.3px;color:#1c1c1c;font-weight:normal;white-space:nowrap;">Srishti Sisodia</div><svg style="position:absolute;left:146px;top:500.5px;" width="16" height="17" viewBox="0 0 16 17" fill="none"><rect x="1.3" y="2.2" width="13.6" height="12.8" fill="#f4f4f4"/>
<path d="M3.3 15.2 H0.9 V1.8 H15.1 V8" stroke="#111" stroke-width="1.3"/>
<path d="M0.9 5.3 H15.1" stroke="#111" stroke-width="1.3"/><path d="M4 0.3 V3 M12 0.3 V3" stroke="#111" stroke-width="1.1"/>
<circle cx="7.5" cy="11.8" r="1.8" stroke="#2f74c8" stroke-width="1.3"/>
<path d="M4.4 16 A3.3 3.3 0 0 1 10.6 16" stroke="#2f74c8" stroke-width="1.3"/>
<circle cx="12.6" cy="8.3" r="1.8" fill="#f4f4f4" stroke="#111" stroke-width="1.2"/>
<path d="M13.9 9.8 L15.8 11.8" stroke="#111" stroke-width="1.2"/></svg><div style="position:absolute;left:357px;top:504.00px;font-size:11.3px;line-height:11.3px;color:#1c1c1c;font-weight:normal;white-space:nowrap;">Srishti Sisodia</div><div style="position:absolute;left:642.5px;top:504.00px;font-size:11.3px;line-height:11.3px;color:#1c1c1c;font-weight:normal;white-space:nowrap;">Tue 8/8/2023 3:11 PM</div><div style="position:absolute;left:818.5px;top:504.00px;font-size:11.3px;line-height:11.3px;color:#1c1c1c;font-weight:normal;white-space:nowrap;">Srishti Sisodia</div><svg style="position:absolute;left:146px;top:524.5px;" width="16" height="17" viewBox="0 0 16 17" fill="none"><rect x="1.3" y="2.2" width="13.6" height="12.8" fill="#f4f4f4"/>
<path d="M3.3 15.2 H0.9 V1.8 H15.1 V8" stroke="#111" stroke-width="1.3"/>
<path d="M0.9 5.3 H15.1" stroke="#111" stroke-width="1.3"/><path d="M4 0.3 V3 M12 0.3 V3" stroke="#111" stroke-width="1.1"/>
<circle cx="7.5" cy="11.8" r="1.8" stroke="#2f74c8" stroke-width="1.3"/>
<path d="M4.4 16 A3.3 3.3 0 0 1 10.6 16" stroke="#2f74c8" stroke-width="1.3"/>
<circle cx="12.6" cy="8.3" r="1.8" fill="#f4f4f4" stroke="#111" stroke-width="1.2"/>
<path d="M13.9 9.8 L15.8 11.8" stroke="#111" stroke-width="1.2"/></svg><div style="position:absolute;left:357px;top:528.00px;font-size:11.3px;line-height:11.3px;color:#1c1c1c;font-weight:normal;white-space:nowrap;">Srishti Sisodia</div><div style="position:absolute;left:642.5px;top:528.00px;font-size:11.3px;line-height:11.3px;color:#1c1c1c;font-weight:normal;white-space:nowrap;">Tue 8/8/2023 3:11 PM</div><div style="position:absolute;left:818.5px;top:528.00px;font-size:11.3px;line-height:11.3px;color:#1c1c1c;font-weight:normal;white-space:nowrap;">Srishti Sisodia</div><svg style="position:absolute;left:146px;top:548.5px;" width="16" height="17" viewBox="0 0 16 17" fill="none"><rect x="1.3" y="2.2" width="13.6" height="12.8" fill="#f4f4f4"/>
<path d="M3.3 15.2 H0.9 V1.8 H15.1 V8" stroke="#111" stroke-width="1.3"/>
<path d="M0.9 5.3 H15.1" stroke="#111" stroke-width="1.3"/><path d="M4 0.3 V3 M12 0.3 V3" stroke="#111" stroke-width="1.1"/>
<circle cx="7.5" cy="11.8" r="1.8" stroke="#2f74c8" stroke-width="1.3"/>
<path d="M4.4 16 A3.3 3.3 0 0 1 10.6 16" stroke="#2f74c8" stroke-width="1.3"/>
<circle cx="12.6" cy="8.3" r="1.8" fill="#f4f4f4" stroke="#111" stroke-width="1.2"/>
<path d="M13.9 9.8 L15.8 11.8" stroke="#111" stroke-width="1.2"/></svg><div style="position:absolute;left:357px;top:552.00px;font-size:11.3px;line-height:11.3px;color:#1c1c1c;font-weight:normal;white-space:nowrap;">Srishti Sisodia</div><div style="position:absolute;left:642.5px;top:552.00px;font-size:11.3px;line-height:11.3px;color:#1c1c1c;font-weight:normal;white-space:nowrap;">Tue 8/8/2023 3:11 PM</div><div style="position:absolute;left:818.5px;top:552.00px;font-size:11.3px;line-height:11.3px;color:#1c1c1c;font-weight:normal;white-space:nowrap;">Srishti Sisodia</div><svg style="position:absolute;left:146px;top:572.5px;" width="16" height="17" viewBox="0 0 16 17" fill="none"><rect x="0.9" y="1.8" width="14.2" height="13.4" fill="#f6f6f6" stroke="#111" stroke-width="1.3"/>
<path d="M0.9 5.5 H15.1" stroke="#111" stroke-width="1.3"/><path d="M4 0.5 V3 M12 0.5 V3" stroke="#111" stroke-width="1.1"/>
<rect x="6.8" y="9" width="2" height="2" fill="#111"/></svg><div style="position:absolute;left:357px;top:576.00px;font-size:11.3px;line-height:11.3px;color:#1c1c1c;font-weight:normal;white-space:nowrap;">Srishti Sisodia</div><div style="position:absolute;left:642.5px;top:576.00px;font-size:11.3px;line-height:11.3px;color:#1c1c1c;font-weight:normal;white-space:nowrap;">Mon 3/27/2023 7:56 PM</div><div style="position:absolute;left:818.5px;top:576.00px;font-size:11.3px;line-height:11.3px;color:#1c1c1c;font-weight:normal;white-space:nowrap;">Srishti Sisodia</div><svg style="position:absolute;left:122px;top:572px;" width="17" height="18" viewBox="0 0 17 18" fill="none"><path d="M3.5 12.5 V7.5 A5 5 0 0 1 13.5 7.5 V12.5 L15 14.5 H2 L3.5 12.5 Z" fill="#f6f6f6" stroke="#111" stroke-width="1.2" stroke-linejoin="round"/>
<path d="M7 15.5 A1.6 1.6 0 0 0 10 15.5" stroke="#111" stroke-width="1.1"/></svg><div style="position:absolute;left:2px;top:847px;width:1097px;height:22px;background:#393939;border-radius:0 0 8px 8px;"></div><div style="position:absolute;left:58px;top:847px;width:1px;height:0px;"></div><div style="position:absolute;left:10.5px;top:853.00px;font-size:11.3px;line-height:11.3px;color:#eeeeee;font-weight:normal;white-space:nowrap;transform:scaleX(0.9555);transform-origin:0 0;">Items: 13</div><div style="position:absolute;left:647.6px;top:854.00px;font-size:11.3px;line-height:11.3px;color:#eeeeee;font-weight:normal;white-space:nowrap;transform:scaleX(1.0342);transform-origin:0 0;">Online with: Microsoft Exchange</div><div style="position:absolute;left:834px;top:848px;width:40px;height:21px;background:#424242;"></div><svg style="position:absolute;left:846px;top:851px;" width="16" height="14" viewBox="0 0 16 14" fill="none"><rect x="1" y="1" width="14" height="12" stroke="#fff" stroke-width="1.2"/>
<path d="M1 3 H15 M4 3 V13 M12 3 V13" stroke="#fff" stroke-width="1.1"/></svg><svg style="position:absolute;left:886px;top:851px;" width="16" height="14" viewBox="0 0 16 14" fill="none"><path d="M1 1 H6 L8 2.5 L10 1 H15 V12.5 H10 L8 13.5 L6 12.5 H1 Z" stroke="#fff" stroke-width="1.1"/>
<path d="M8 2.5 V13" stroke="#fff" stroke-width="1"/>
<path d="M3 4.5 H6 M3 6.8 H6 M3 9 H6 M10 4.5 H13 M10 6.8 H13 M10 9 H13" stroke="#fff" stroke-width="1"/></svg><div style="position:absolute;left:921px;top:858px;width:7px;height:1px;background:#8c8c8c;"></div><div style="position:absolute;left:933px;top:858px;width:100px;height:1px;background:#a0a0a0;"></div><div style="position:absolute;left:983px;top:854px;width:1px;height:8px;background:#c8c8c8;"></div><div style="position:absolute;left:1037px;top:858px;width:8px;height:1px;background:#8c8c8c;"></div><div style="position:absolute;left:1040.5px;top:854.5px;width:1px;height:8px;background:#8c8c8c;"></div><div style="position:absolute;left:1059px;top:854.00px;font-size:11.3px;line-height:11.3px;color:#9a9a9a;font-weight:normal;white-space:nowrap;transform:scaleX(0.8840);transform-origin:0 0;">10%</div><div style="position:absolute;left:70px;top:158px;width:313px;height:155px;background:#4a4a4a;border:1px solid #8c8c8c;border-radius:0 5px 5px 5px;box-sizing:border-box;box-shadow:0 2px 4px rgba(0,0,0,0.25);"></div><div style="position:absolute;left:224px;top:160px;width:76px;height:56px;background:#575757;border:1px solid #9c9c9c;box-sizing:border-box;"></div><div style="position:absolute;left:71px;top:225px;width:311px;height:1px;background:#7a7a7a;"></div><svg style="position:absolute;left:96px;top:168px;" width="28" height="24" viewBox="0 0 28 24" fill="none"><rect x="1" y="1.5" width="26" height="21.5" fill="#a8b8d0"/>
<rect x="1" y="1.5" width="26" height="4.5" fill="#5f92e8"/>
<rect x="1.7" y="6.2" width="4" height="3" fill="#ffffff"/><rect x="6.7" y="6.2" width="4" height="3" fill="#ffffff"/><rect x="11.7" y="6.2" width="4" height="3" fill="#ffffff"/><rect x="16.7" y="6.2" width="4" height="3" fill="#ffffff"/><rect x="21.7" y="6.2" width="4" height="3" fill="#ffffff"/><rect x="1.7" y="10.2" width="4" height="3" fill="#ffffff"/><rect x="6.7" y="10.2" width="4" height="3" fill="#ffffff"/><rect x="11.7" y="10.2" width="4" height="3" fill="#ffffff"/><rect x="16.7" y="10.2" width="4" height="3" fill="#ffffff"/><rect x="21.7" y="10.2" width="4" height="3" fill="#ffffff"/><rect x="1.7" y="14.2" width="4" height="3" fill="#ffffff"/><rect x="6.7" y="14.2" width="4" height="3" fill="#ffffff"/><rect x="11.7" y="14.2" width="4" height="3" fill="#ffffff"/><rect x="16.7" y="14.2" width="4" height="3" fill="#ffffff"/><rect x="21.7" y="14.2" width="4" height="3" fill="#ffffff"/><rect x="1.7" y="18.2" width="4" height="3" fill="#ffffff"/><rect x="6.7" y="18.2" width="4" height="3" fill="#ffffff"/><rect x="11.7" y="18.2" width="4" height="3" fill="#ffffff"/><rect x="16.7" y="18.2" width="4" height="3" fill="#ffffff"/><rect x="21.7" y="18.2" width="4" height="3" fill="#ffffff"/>
<rect x="16.6" y="10" width="4.4" height="3.6" fill="none" stroke="#e03a10" stroke-width="1"/>
<g fill="#f0f0f0"><rect x="4.5" y="0" width="1.6" height="3.5" rx="0.8"/><rect x="8.7" y="0" width="1.6" height="3.5" rx="0.8"/><rect x="12.9" y="0" width="1.6" height="3.5" rx="0.8"/><rect x="17.1" y="0" width="1.6" height="3.5" rx="0.8"/><rect x="21.3" y="0" width="1.6" height="3.5" rx="0.8"/></g></svg><svg style="position:absolute;left:171px;top:166px;" width="30" height="30" viewBox="0 0 30 30" fill="none"><rect x="1" y="1.5" width="26" height="21.5" fill="#a8b8d0"/>
<rect x="1" y="1.5" width="26" height="4.5" fill="#5f92e8"/>
<rect x="1.7" y="6.2" width="4" height="3" fill="#ffffff"/><rect x="6.7" y="6.2" width="4" height="3" fill="#ffffff"/><rect x="11.7" y="6.2" width="4" height="3" fill="#ffffff"/><rect x="16.7" y="6.2" width="4" height="3" fill="#ffffff"/><rect x="21.7" y="6.2" width="4" height="3" fill="#ffffff"/><rect x="1.7" y="10.2" width="4" height="3" fill="#ffffff"/><rect x="6.7" y="10.2" width="4" height="3" fill="#ffffff"/><rect x="11.7" y="10.2" width="4" height="3" fill="#ffffff"/><rect x="16.7" y="10.2" width="4" height="3" fill="#ffffff"/><rect x="21.7" y="10.2" width="4" height="3" fill="#ffffff"/><rect x="1.7" y="14.2" width="4" height="3" fill="#ffffff"/><rect x="6.7" y="14.2" width="4" height="3" fill="#ffffff"/><rect x="11.7" y="14.2" width="4" height="3" fill="#ffffff"/><rect x="16.7" y="14.2" width="4" height="3" fill="#ffffff"/><rect x="21.7" y="14.2" width="4" height="3" fill="#ffffff"/><rect x="1.7" y="18.2" width="4" height="3" fill="#ffffff"/><rect x="6.7" y="18.2" width="4" height="3" fill="#ffffff"/><rect x="11.7" y="18.2" width="4" height="3" fill="#ffffff"/><rect x="16.7" y="18.2" width="4" height="3" fill="#ffffff"/><rect x="21.7" y="18.2" width="4" height="3" fill="#ffffff"/>
<g fill="#f0f0f0"><rect x="4.5" y="0" width="1.6" height="3.5" rx="0.8"/><rect x="8.7" y="0" width="1.6" height="3.5" rx="0.8"/><rect x="12.9" y="0" width="1.6" height="3.5" rx="0.8"/><rect x="17.1" y="0" width="1.6" height="3.5" rx="0.8"/><rect x="21.3" y="0" width="1.6" height="3.5" rx="0.8"/></g>
<path d="M23 19.5 L28.5 27.5" stroke="#777" stroke-width="1.8"/>
<circle cx="20" cy="15.5" r="5.3" fill="#c8d8ee" fill-opacity="0.85" stroke="#444" stroke-width="1.1"/></svg><svg style="position:absolute;left:247px;top:166px;" width="30" height="27" viewBox="0 0 30 27" fill="none"><rect x="1.5" y="1.5" width="27" height="24" fill="#f4f6fa" stroke="#9aa8bc" stroke-width="1"/><path d="M3.5 4.5 H7.5 M9.5 4.5 H13.5 M15.5 4.5 H25" stroke="#808890" stroke-width="1"/><path d="M3.5 7.5 H7.5 M9.5 7.5 H13.5 M15.5 7.5 H25" stroke="#808890" stroke-width="1"/><path d="M3.5 10.5 H7.5 M9.5 10.5 H13.5 M15.5 10.5 H25" stroke="#808890" stroke-width="1"/><path d="M3.5 13.5 H7.5 M9.5 13.5 H13.5 M15.5 13.5 H25" stroke="#808890" stroke-width="1"/><path d="M3.5 16.5 H7.5 M9.5 16.5 H13.5 M15.5 16.5 H25" stroke="#808890" stroke-width="1"/><path d="M3.5 19.5 H7.5 M9.5 19.5 H13.5 M15.5 19.5 H25" stroke="#808890" stroke-width="1"/></svg><svg style="position:absolute;left:321px;top:166px;" width="34" height="29" viewBox="0 0 34 29" fill="none"><rect x="1.5" y="1.5" width="27" height="24" fill="#f4f6fa" stroke="#9aa8bc" stroke-width="1"/><path d="M3.5 4.5 H7.5 M9.5 4.5 H13.5 M15.5 4.5 H25" stroke="#808890" stroke-width="1"/><path d="M3.5 7.5 H7.5 M9.5 7.5 H13.5 M15.5 7.5 H25" stroke="#808890" stroke-width="1"/><path d="M3.5 10.5 H7.5 M9.5 10.5 H13.5 M15.5 10.5 H25" stroke="#808890" stroke-width="1"/><path d="M3.5 13.5 H7.5 M9.5 13.5 H13.5 M15.5 13.5 H25" stroke="#808890" stroke-width="1"/><path d="M3.5 16.5 H7.5 M9.5 16.5 H13.5 M15.5 16.5 H25" stroke="#808890" stroke-width="1"/><path d="M3.5 19.5 H7.5 M9.5 19.5 H13.5 M15.5 19.5 H25" stroke="#808890" stroke-width="1"/>
<path d="M19 21 L23 25.5 L32 16.5" stroke="#1aa020" stroke-width="3"/></svg><div style="position:absolute;left:86.4px;top:198.00px;font-size:12px;line-height:12px;color:#f4f4f4;font-weight:normal;white-space:nowrap;transform:scaleX(0.9568);transform-origin:0 0;">Calendar</div><div style="position:absolute;left:165px;top:198.00px;font-size:12px;line-height:12px;color:#f4f4f4;font-weight:normal;white-space:nowrap;transform:scaleX(0.9605);transform-origin:0 0;">Preview</div><div style="position:absolute;left:253.5px;top:198.00px;font-size:12px;line-height:12px;color:#f4f4f4;font-weight:normal;white-space:nowrap;transform:scaleX(0.9311);transform-origin:0 0;">List</div><div style="position:absolute;left:321px;top:198.00px;font-size:12px;line-height:12px;color:#f4f4f4;font-weight:normal;white-space:nowrap;transform:scaleX(1.0096);transform-origin:0 0;">Active</div><div style="position:absolute;left:109.3px;top:235.00px;font-size:12px;line-height:12px;color:#f4f4f4;font-weight:normal;white-space:nowrap;transform:scaleX(0.9514);transform-origin:0 0;"><u>M</u>anage Views...</div><div style="position:absolute;left:109.3px;top:263.00px;font-size:12px;line-height:12px;color:#f4f4f4;font-weight:normal;white-space:nowrap;transform:scaleX(0.9525);transform-origin:0 0;"><u>S</u>ave Current View As a New View...</div><div style="position:absolute;left:109.3px;top:291.00px;font-size:12px;line-height:12px;color:#f4f4f4;font-weight:normal;white-space:nowrap;transform:scaleX(0.9749);transform-origin:0 0;"><u>A</u>pply Current View to Other Calendar Folders...</div><svg style="position:absolute;left:0px;top:0px;pointer-events:none;filter:drop-shadow(0.5px 1px 1px rgba(0,0,0,0.4));" width="1100" height="869" viewBox="0 0 1100 869" fill="none">
<path d="M56.5 163 L45.0 146.0" stroke="#ee3a3a" stroke-width="3.6"/>
<path d="M34 126 L52 142 L38 150 Z" fill="#ee3a3a"/>
<circle cx="56.5" cy="163" r="18" fill="#ee3a3a"/>
<text x="56.5" y="171.5" text-anchor="middle" font-family="Liberation Sans" font-weight="bold" font-size="24" fill="#fff" style="filter:drop-shadow(0.6px 0.8px 0.6px rgba(0,0,0,0.45))">1</text></svg><svg style="position:absolute;left:0px;top:0px;pointer-events:none;filter:drop-shadow(0.5px 1px 1px rgba(0,0,0,0.4));" width="1100" height="869" viewBox="0 0 1100 869" fill="none">
<path d="M51.7 54 L69.9 89.0" stroke="#ee3a3a" stroke-width="3.6"/>
<path d="M81 109.4 L62.8 93 L77 85 Z" fill="#ee3a3a"/>
<circle cx="51.7" cy="54" r="18" fill="#ee3a3a"/>
<text x="51.7" y="62.5" text-anchor="middle" font-family="Liberation Sans" font-weight="bold" font-size="24" fill="#fff" style="filter:drop-shadow(0.6px 0.8px 0.6px rgba(0,0,0,0.45))">2</text></svg><svg style="position:absolute;left:0px;top:0px;pointer-events:none;filter:drop-shadow(0.5px 1px 1px rgba(0,0,0,0.4));" width="1100" height="869" viewBox="0 0 1100 869" fill="none">
<path d="M308.5 249.2 L285.7 230.4" stroke="#ee3a3a" stroke-width="3.6"/>
<path d="M269 215.2 L291 224.4 L280.4 236.4 Z" fill="#ee3a3a"/>
<circle cx="308.5" cy="249.2" r="18" fill="#ee3a3a"/>
<text x="308.5" y="257.7" text-anchor="middle" font-family="Liberation Sans" font-weight="bold" font-size="24" fill="#fff" style="filter:drop-shadow(0.6px 0.8px 0.6px rgba(0,0,0,0.45))">3</text></svg><svg style="position:absolute;left:0px;top:0px;pointer-events:none;filter:drop-shadow(0.5px 1px 1px rgba(0,0,0,0.4));" width="1100" height="869" viewBox="0 0 1100 869" fill="none">
<path d="M600.5 269.2 L623.0 249.5" stroke="#ee3a3a" stroke-width="3.6"/>
<path d="M639.6 233.4 L618 244 L628 255 Z" fill="#ee3a3a"/>
<circle cx="600.5" cy="269.2" r="18" fill="#ee3a3a"/>
<text x="600.5" y="277.7" text-anchor="middle" font-family="Liberation Sans" font-weight="bold" font-size="24" fill="#fff" style="filter:drop-shadow(0.6px 0.8px 0.6px rgba(0,0,0,0.45))">4</text></svg>
</body></html>
